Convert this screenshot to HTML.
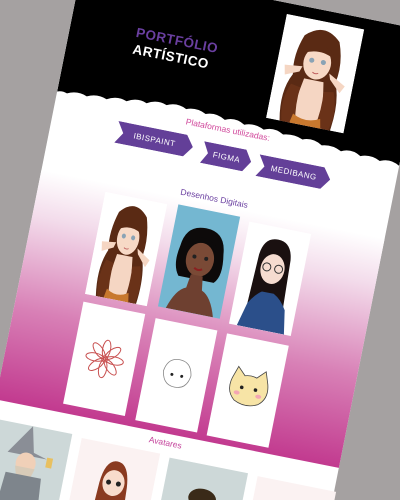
<!DOCTYPE html>
<html style="width:400px;height:500px;overflow:hidden"><head><meta charset="utf-8"><style>
*{margin:0;padding:0;box-sizing:border-box}
body{width:400px;height:500px;overflow:hidden;position:relative;background:#a5a1a1;font-family:"Liberation Sans",sans-serif}
#wrap{position:absolute;left:0;top:0;width:400px;height:500px;overflow:hidden}
#pg{position:absolute;left:83px;top:-38px;width:350px;height:600px;background:#fff;transform-origin:0 0;transform:rotate(11.3deg)}
.abs{position:absolute}
.hdr{left:0;top:0;width:350px;height:140px}
.t1{left:66px;top:51px;color:#6a3fa0;font-weight:bold;font-size:13.5px;letter-spacing:0.5px}
.t2{left:66px;top:68px;color:#fff;font-weight:bold;font-size:13.5px;letter-spacing:0.5px}
.pl{left:0;width:350px;top:131px;text-align:center;color:#d0459a;font-size:8.5px}
.tag{color:#fff;font-size:8px;letter-spacing:0.5px;display:flex;align-items:center;justify-content:center}
.dd{left:0;width:350px;top:201px;text-align:center;color:#6a3fa0;font-size:8.5px}
.grad{left:0;top:212px;width:350px;height:234px;background:linear-gradient(#fff 0%,#f3dceb 20%,#d880b6 60%,#c23a8f 100%)}
.card{background:#fff;width:63px;height:104px;overflow:hidden}
.av{width:80px;height:120px;overflow:hidden}
.avt{left:0;width:350px;top:450px;text-align:center;color:#c3409a;font-size:8.5px}
</style></head><body>
<svg width="0" height="0" style="position:absolute">
<defs>
<g id="girl">
<rect width="80" height="110" fill="#fff"/>
<path d="M22 18 Q40 0 58 18 Q66 40 62 60 Q70 80 66 110 L14 110 Q8 80 18 60 Q14 40 22 18Z" fill="#5a2a14"/>
<ellipse cx="40" cy="44" rx="14" ry="17" fill="#f7d9c6"/>
<path d="M25 32 Q40 18 55 32 L55 36 Q40 28 25 36Z" fill="#5a2a14"/>
<circle cx="34" cy="42" r="2.6" fill="#8aa3b5"/><circle cx="46" cy="42" r="2.6" fill="#8aa3b5"/>
<path d="M37 54 Q40 56 43 54" stroke="#c06060" fill="none"/>
<path d="M8 52 L26 50 L24 56 L10 62Z M72 62 L54 52 L56 58 L68 70Z" fill="#f5d6c3"/>
<path d="M30 62 L50 62 L58 110 L22 110Z" fill="#f5d6c3"/>
<path d="M18 70 Q10 90 16 110 L30 110 Q26 90 28 72Z M62 70 Q70 90 64 110 L50 110 Q54 90 52 72Z" fill="#6a3218"/>
<path d="M26 100 Q40 108 54 100 L56 110 L24 110Z" fill="#c8782e"/>
</g>
</defs></svg>
<div id="wrap">
<div id="pg">
<svg class="abs hdr" viewBox="0 0 350 140" width="350" height="140">
<path d="M0 0 H350 V138 Q340 132 330 137 Q320 132 310 136 Q300 130 290 135 Q280 130 270 133 Q260 127 250 131 Q240 127 230 130 Q220 124 210 129 Q200 124 190 128 Q180 122 170 127 Q160 121 150 125 Q140 120 130 124 Q120 119 110 124 Q100 120 90 126 Q80 122 70 128 Q60 124 50 130 Q40 126 30 131 Q20 127 10 132 Q5 130 0 132Z" fill="#000"/>
</svg>
<div class="abs t1">PORTFÓLIO</div>
<div class="abs t2">ARTÍSTICO</div>
<svg class="abs" style="left:210px;top:11px" width="79" height="106" viewBox="0 0 80 110" preserveAspectRatio="none"><use href="#girl"/></svg>
<div class="abs pl">Plataformas utilizadas:</div>
<svg class="abs" style="left:66px;top:149px" width="78" height="22"><polygon points="0,0 70,0 78,11 70,22 0,22 7,11" fill="#633f98"/></svg>
<div class="abs tag" style="left:70px;top:149px;width:70px;height:22px">IBISPAINT</div>
<svg class="abs" style="left:154px;top:152px" width="50" height="22"><polygon points="0,0 43,0 50,11 43,22 0,22 6,11" fill="#633f98"/></svg>
<div class="abs tag" style="left:157px;top:152px;width:44px;height:22px">FIGMA</div>
<svg class="abs" style="left:211px;top:154px" width="74" height="22"><polygon points="0,0 66,0 74,11 66,22 0,22 7,11" fill="#633f98"/></svg>
<div class="abs tag" style="left:215px;top:154px;width:66px;height:22px">MEDIBANG</div>
<div class="abs grad"></div>
<div class="abs dd">Desenhos Digitais</div>
<div class="abs card" style="left:67px;top:221px"><svg width="63" height="104" viewBox="0 0 80 110" preserveAspectRatio="none"><use href="#girl"/></svg></div>
<div class="abs card" style="left:141px;top:219px;background:#74b7d1"><svg width="63" height="104" viewBox="0 0 63 104">
<path d="M10 40 Q12 18 32 18 Q52 18 54 40 Q58 62 50 70 L14 70 Q6 60 10 40Z" fill="#0d0a0a"/>
<ellipse cx="32" cy="50" rx="14" ry="17" fill="#7a4a36"/>
<path d="M18 40 Q32 26 46 40 L46 34 Q32 22 18 34Z" fill="#0d0a0a"/>
<circle cx="26" cy="48" r="2" fill="#222"/><circle cx="38" cy="48" r="2" fill="#222"/>
<path d="M28 59 Q32 62 36 59" stroke="#8a2020" stroke-width="2" fill="none"/>
<path d="M26 66 L38 66 L40 80 Q50 84 56 104 L8 104 Q14 84 24 80Z" fill="#6e4030"/></svg></div>
<div class="abs card" style="left:214px;top:222px"><svg width="63" height="104" viewBox="0 0 63 104">
<path d="M16 30 Q18 12 32 12 Q46 12 48 30 L50 80 L14 80Z" fill="#1a1010"/>
<ellipse cx="32" cy="42" rx="12" ry="15" fill="#f6dcd0"/>
<circle cx="26" cy="41" r="4" fill="none" stroke="#333"/><circle cx="38" cy="41" r="4" fill="none" stroke="#333"/>
<path d="M14 80 Q20 70 26 66 L38 66 Q46 70 52 80 L56 104 L8 104Z" fill="#2b4f8a"/></svg></div>
<div class="abs card" style="left:67px;top:333px"><svg width="63" height="104"><g transform="translate(32,52)" fill="none" stroke="#c85050" stroke-width="1">
<ellipse cx="0" cy="-10" rx="4" ry="9"/><ellipse cx="0" cy="-10" rx="4" ry="9" transform="rotate(45)"/><ellipse cx="0" cy="-10" rx="4" ry="9" transform="rotate(90)"/><ellipse cx="0" cy="-10" rx="4" ry="9" transform="rotate(135)"/><ellipse cx="0" cy="-10" rx="4" ry="9" transform="rotate(180)"/><ellipse cx="0" cy="-10" rx="4" ry="9" transform="rotate(225)"/><ellipse cx="0" cy="-10" rx="4" ry="9" transform="rotate(270)"/><ellipse cx="0" cy="-10" rx="4" ry="9" transform="rotate(315)"/><circle r="3"/></g></svg></div>
<div class="abs card" style="left:141px;top:335px"><svg width="63" height="104"><path d="M18 50 Q20 36 32 36 Q44 36 46 50 Q44 64 32 64 Q20 64 18 50Z" fill="none" stroke="#888" stroke-width="0.8"/><circle cx="27" cy="52" r="1.5" fill="#222"/><circle cx="37" cy="52" r="1.5" fill="#222"/></svg></div>
<div class="abs card" style="left:214px;top:336px"><svg width="63" height="104"><path d="M14 42 L18 30 L26 38 Q32 36 38 38 L46 30 L50 42 Q54 56 44 64 Q32 70 20 64 Q10 56 14 42Z" fill="#f7e4a6" stroke="#444" stroke-width="0.8"/><circle cx="25" cy="50" r="1.8" fill="#222"/><circle cx="39" cy="50" r="1.8" fill="#222"/><ellipse cx="21" cy="56" rx="3" ry="2" fill="#f4a6b4"/><ellipse cx="43" cy="56" rx="3" ry="2" fill="#f4a6b4"/></svg></div>
<div class="abs avt">Avatares</div>
<div class="abs av" style="left:2px;top:465px;background:#cdd8d8"><svg width="80" height="120"><path d="M20 30 L40 0 L46 26 L60 30Z" fill="#8a8e96"/><ellipse cx="40" cy="38" rx="10" ry="11" fill="#f0d0b8"/><path d="M30 42 Q40 80 50 42Z" fill="#d8cbb8"/><path d="M22 50 L58 50 L64 120 L16 120Z" fill="#7e858c"/><rect x="60" y="28" width="6" height="10" fill="#e8c060"/></svg></div>
<div class="abs av" style="left:92px;top:467px;background:#fbf2f2"><svg width="80" height="120"><path d="M26 40 Q28 16 40 16 Q52 16 54 40 L56 80 L24 80Z" fill="#8a3a20"/><ellipse cx="40" cy="38" rx="11" ry="13" fill="#f8dccc"/><circle cx="35" cy="38" r="2.5" fill="#222"/><circle cx="45" cy="38" r="2.5" fill="#222"/><path d="M26 60 L54 60 L58 120 L22 120Z" fill="#1f3a28"/></svg></div>
<div class="abs av" style="left:182px;top:469px;background:#cdd8d8"><svg width="80" height="120"><ellipse cx="40" cy="34" rx="14" ry="10" fill="#3a2a18"/></svg></div>
<div class="abs av" style="left:272px;top:470px;background:#fbf2f2"><svg width="80" height="120"><ellipse cx="40" cy="34" rx="11" ry="10" fill="#d8cfc0"/></svg></div>
</div>
</div>
</body></html>
